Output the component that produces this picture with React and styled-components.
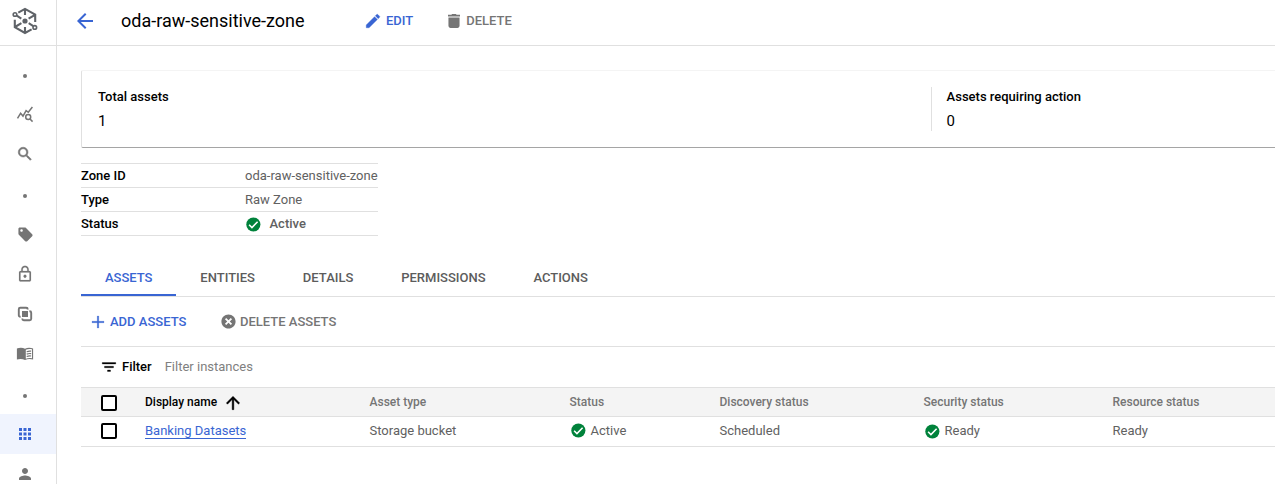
import React from "react";
import styled, { createGlobalStyle } from "styled-components";

const blue = "#3965d3";
const grey = "#757575";
const line = "#e0e0e0";

const GlobalStyle = createGlobalStyle`
  * { box-sizing: border-box; }
  body { margin: 0; background: #fff; overflow: hidden; font-family: Roboto, "Liberation Sans", sans-serif; font-size: 13px; color: #616161; }
`;

const Page = styled.div`
  display: flex;
  width: 1275px;
  height: 484px;
  overflow: hidden;
`;
const Sidebar = styled.nav`
  flex: 0 0 57px;
  height: 484px;
  overflow: hidden;
  border-right: 1px solid ${line};
`;
const LogoBox = styled.div`
  height: 46px;
  border-bottom: 1px solid ${line};
  margin-bottom: 8px;
  padding: 7px 0 0 11px;
`;
const NavItem = styled.div`
  height: 40px;
  width: 56px;
  padding-right: 6px;
  display: flex;
  align-items: center;
  justify-content: center;
  color: ${(p) => (p.$active ? blue : grey)};
  background: ${(p) => (p.$active ? "#f0f4fe" : "transparent")};
`;
const Dot = styled.span`
  width: 4px;
  height: 4px;
  margin-top: 4px;
  border-radius: 50%;
  background: ${grey};
`;
const Icon = styled.svg`
  display: block;
  flex: none;
  fill: currentColor;
`;
const Main = styled.main`
  flex: 1;
  min-width: 0;
`;
const Header = styled.header`
  height: 46px;
  border-bottom: 1px solid ${line};
  padding: 0 0 4px 16px;
  display: flex;
  align-items: center;
  color: ${blue};
`;
const Title = styled.h1`
  margin: 0 60px 0 24px;
  width: 183px;
  font-size: 18px;
  line-height: 24px;
  font-weight: 400;
  color: #000;
  white-space: nowrap;
`;
const Action = styled.button`
  display: flex;
  align-items: center;
  gap: ${(p) => p.$gap ?? 3}px;
  margin: 0 ${(p) => p.$after ?? 0}px 0 0;
  padding: 0;
  border: 0;
  background: none;
  font: 500 13px/18px Roboto, sans-serif;
  white-space: nowrap;
  color: ${(p) => (p.$muted ? grey : blue)};
`;
const Content = styled.div`
  padding: 24px 0 0 24px;
`;
const Card = styled.section`
  display: flex;
  height: 78px;
  padding: 16px 0 0 16px;
  border: solid;
  border-width: 1px 0 1px 1px;
  border-color: #f4f4f4 transparent #a5a5a5 #e0e0e0;
  border-radius: 2px 0 0 2px;
`;
const Metric = styled.div`
  flex: 0 0 ${(p) => p.$width}px;
  height: 44px;
  padding-top: 1px;
  padding-left: ${(p) => (p.$divided ? 14.6 : 0)}px;
  border-left: ${(p) => (p.$divided ? `1px solid ${line}` : "0")};
  color: #000;
`;
const MetricLabel = styled.div`
  font-weight: 500;
  line-height: 18px;
`;
const MetricValue = styled.div`
  font-size: 15px;
  line-height: 20px;
  margin-top: 5px;
`;
const Facts = styled.dl`
  width: 297px;
  margin: 15px 0 0;
  border-top: 1px solid ${line};
`;
const Fact = styled.div`
  display: flex;
  height: 24px;
  line-height: 23px;
  border-bottom: 1px solid ${line};
`;
const Term = styled.dt`
  flex: 0 0 164px;
  font-weight: 500;
  color: #000;
`;
const Detail = styled.dd`
  margin: 0;
  display: flex;
  align-items: center;
  gap: 7.5px;
  white-space: nowrap;
  font-weight: ${(p) => (p.$strong ? 500 : 400)};
`;
const Tabs = styled.div`
  display: flex;
  height: 37px;
  margin-top: 24px;
  border-bottom: 1px solid ${line};
`;
const Tab = styled.div`
  height: 36px;
  padding: 0 23.95px;
  line-height: 36px;
  font-weight: 500;
  white-space: nowrap;
  color: ${(p) => (p.$active ? blue : "#5c5c5c")};
  border-bottom: 2px solid ${(p) => (p.$active ? blue : "transparent")};
`;
const Toolbar = styled.div`
  display: flex;
  align-items: center;
  height: 50px;
  padding-left: 8px;
  border-bottom: 1px solid ${line};
`;
const FilterBar = styled.div`
  display: flex;
  align-items: center;
  height: 40px;
  padding-left: 19px;
  color: #000;
`;
const FilterLabel = styled.span`
  font-weight: 500;
  line-height: 16px;
  margin: 0 13px 0 4px;
`;
const Placeholder = styled.span`
  line-height: 16px;
  color: #808080;
`;
const Row = styled.div`
  display: grid;
  grid-template-columns: 64px 224.5px 200px 150px 204px 189px 1fr;
  align-items: center;
  height: 30px;
  padding-bottom: ${(p) => p.$lift ?? 0}px;
  border-bottom: 1px solid ${line};
  white-space: nowrap;
`;
const HeadRow = styled(Row)`
  border-top: 1px solid ${line};
  background: #f4f4f4;
  font-size: 12px;
  font-weight: 500;
  color: ${grey};
`;
const Checkbox = styled.span`
  width: 16px;
  height: 16px;
  margin: ${(p) => p.$top ?? 0}px 0 0 20px;
  border: 2px solid #000;
  border-radius: 2px;
  background: #fff;
`;
const Cell = styled.div`
  display: flex;
  align-items: center;
  gap: ${(p) => p.$gap ?? 4}px;
`;
const SortedCell = styled(Cell)`
  color: #000;
`;
const SortIcon = styled(Icon)`
  margin-top: 2px;
`;
const Link = styled.a`
  line-height: 15px;
  color: ${blue};
  border-bottom: 1px solid ${blue};
`;
const CheckIcon = styled(Icon)`
  color: #00823b;
  margin-top: ${(p) => p.$drop ?? 0}px;
`;

const Glyph = ({ d, size = 18, weight = 0, as: Svg = Icon }) => (
  <Svg width={size} height={size} viewBox="0 0 24 24">
    <path d={d} stroke="currentColor" strokeWidth={weight} />
  </Svg>
);
const Check = ({ drop }) => (
  <CheckIcon $drop={drop} width="17" height="17" viewBox="0 0 24 24">
    <circle cx="11.8" cy="12" r="10" />
    <path d="m5.8 12.3 4 4 8-8.2" fill="none" stroke="#fff" strokeWidth="2.2" />
  </CheckIcon>
);

const paths = {
  back: "M20 11H7.83l5.59-5.59L12 4l-8 8 8 8 1.41-1.41L7.83 13H20v-2z",
  edit: "M3 17.25V21h3.75L17.81 9.94l-3.75-3.75L3 17.25zM20.71 7.04a.996.996 0 0 0 0-1.41l-2.34-2.34a.996.996 0 0 0-1.41 0l-1.83 1.83 3.75 3.75 1.83-1.83z",
  trash: "M4.6 7.3V18.4C4.6 20 5.8 21.2 7.4 21.2h9.2c1.6 0 2.8-1.2 2.8-2.8V7.3zM20 3.8h-4.5l-1-1h-5l-1 1H4v2.1h16z",
  search: "M15.5 14h-.79l-.28-.27A6.47 6.47 0 0 0 16 9.5 6.5 6.5 0 1 0 9.5 16c1.61 0 3.09-.59 4.23-1.57l.27.28v.79l5 4.99L20.49 19l-4.99-5zm-6 0C7.01 14 5 11.99 5 9.5S7.01 5 9.5 5 14 7.01 14 9.5 11.99 14 9.5 14z",
  tag: "M21.41 11.58l-9-9C12.05 2.22 11.55 2 11 2H4c-1.1 0-2 .9-2 2v7c0 .55.22 1.05.59 1.42l9 9c.36.36.86.58 1.41.58s1.05-.22 1.41-.59l7-7c.37-.36.59-.86.59-1.41s-.23-1.06-.59-1.42zM6.4 8.2C5.4 8.2 4.6 7.4 4.6 6.4S5.4 4.6 6.4 4.6 8.2 5.4 8.2 6.4 7.4 8.2 6.4 8.2z",
  lock: "M18 8h-1V6c0-2.76-2.24-5-5-5S7 3.24 7 6v2H6c-1.1 0-2 .9-2 2v10c0 1.1.9 2 2 2h12c1.1 0 2-.9 2-2V10c0-1.1-.9-2-2-2zM9 6c0-1.66 1.34-3 3-3s3 1.34 3 3v2H9V6zm9 14H6V10h12v10zm-6-3c1.1 0 2-.9 2-2s-.9-2-2-2-2 .9-2 2 .9 2 2 2z",
  apps: "M4 8h4V4H4v4zm6 12h4v-4h-4v4zm-6 0h4v-4H4v4zm0-6h4v-4H4v4zm6 0h4v-4h-4v4zm6-10v4h4V4h-4zm-6 4h4V4h-4v4zm6 6h4v-4h-4v4zm0 6h4v-4h-4v4z",
  person: "M12 12c2.21 0 4-1.79 4-4s-1.79-4-4-4-4 1.79-4 4 1.79 4 4 4zm0 2c-2.67 0-8 1.34-8 4v2h16v-2c0-2.66-5.33-4-8-4z",
  cancel: "M12 2C6.47 2 2 6.47 2 12s4.47 10 10 10 10-4.47 10-10S17.53 2 12 2zm5 13.2L15.2 17 12 13.8 8.8 17 7 15.2 10.2 12 7 8.8 8.8 7 12 10.2 15.2 7 17 8.8 13.8 12z",
  filter: "M10 18h4v-2h-4v2zM3 6v2h18V6H3zm3 7h12v-2H6v2z",
  sort: "M4 12l1.41 1.41L11 7.83V20h2V7.83l5.58 5.59L20 12l-8-8-8 8z",
  add: "M20 13h-7v7h-2v-7H4v-2h7V4h2v7h7v2z",
};

const Logo = () => (
  <Icon width="28" height="28" viewBox="0 0 28 28">
    <g fill="none" stroke="#5f6368" strokeWidth="2.1">
      <path d="M7.3 5.6 14 1.9l10.2 5.7v7.3M14 1.9v6M17.6 11.7l6.4-3.9M3.8 12.8v7.4L14 26l6.6-3.6M14 26v-6M10.4 16.1 4 20M5.8 8.7l4.5 2.9M17.7 16.2l4.6 2.9" />
      <circle cx="4" cy="7.5" r="1.8" strokeWidth="1.6" />
      <circle cx="23.8" cy="20.4" r="1.8" strokeWidth="1.6" />
    </g>
    <circle cx="14" cy="14" r="2.6" fill="#5f6368" />
  </Icon>
);
const Explore = () => (
  <Icon width="18" height="18" viewBox="0 0 18 18">
    <g fill="none" stroke="currentColor" strokeWidth="1.5">
      <path d="M1.5 13.4 4.6 8.3l2.4 2.8 3.1-5.5 2.2 1.7L16.4 2" />
      <circle cx="12.2" cy="12" r="2.5" />
      <path d="m14 14 2.6 2.6" />
    </g>
  </Icon>
);
const Overlap = () => (
  <Icon width="18" height="18" viewBox="0 0 18 18">
    <path
      d="M4.6 11.7H4.3A1.5 1.5 0 0 1 2.8 10.2V4.3A1.5 1.5 0 0 1 4.3 2.800h5.900a1.500 1.500 0 0 1 1.500 1.500v.3M13.400 6.300h.3a1.500 1.500 0 0 1 1.500 1.500v5.900a1.500 1.500 0 0 1-1.500 1.500H7.800a1.500 1.500 0 0 1-1.500-1.500v-.3"
      fill="none"
      stroke="currentColor"
      strokeWidth="1.9"
    />
    <path d="M6 6h6v6H6z" />
  </Icon>
);
const Book = () => (
  <Icon width="18" height="18" viewBox="0 0 18 18">
    <path d="M.9 3.5C3.5 2.6 6.7 2.5 9 3.8c2.3-1.3 5.5-1.2 8.1-.3v11c-2.7-.8-5.6-.8-8.1.6-2.5-1.4-5.4-1.4-8.1-.6z" />
    <path d="M9.8 4.7c1.9-.9 4-1 6.2-.4v8.9c-2.2-.5-4.3-.3-6.2.5z" fill="#fff" />
    <path d="M10.7 6.7q2-.8 4.5-.5M10.7 9.1q2-.8 4.5-.5M10.7 11.5q2-.8 4.5-.5" fill="none" stroke="currentColor" strokeWidth="1.2" />
  </Icon>
);

const nav = [
  <Dot />, <Explore />, <Glyph d={paths.search} weight={0.7} />, <Dot />,
  <Glyph d={paths.tag} size={17} />, <Glyph d={paths.lock} weight={0.2} />, <Overlap />, <Book />,
  <Dot />, <Glyph d={paths.apps} />, <Glyph d={paths.person} />,
];

export default function App() {
  return (
    <>
      <GlobalStyle />
      <Page>
        <Sidebar>
          <LogoBox><Logo /></LogoBox>
          {nav.map((icon, i) => <NavItem key={i} $active={i === 9}>{icon}</NavItem>)}
        </Sidebar>
        <Main>
          <Header>
            <Glyph d={paths.back} size={24} />
            <Title>oda-raw-sensitive-zone</Title>
            <Action $gap={4} $after={32}><Glyph d={paths.edit} weight={0.5} />EDIT</Action>
            <Action $muted><Glyph d={paths.trash} />DELETE</Action>
          </Header>
          <Content>
            <Card>
              <Metric $width={833}>
                <MetricLabel>Total assets</MetricLabel>
                <MetricValue>1</MetricValue>
              </Metric>
              <Metric $width={343} $divided>
                <MetricLabel>Assets requiring action</MetricLabel>
                <MetricValue>0</MetricValue>
              </Metric>
            </Card>
            <Facts>
              <Fact><Term>Zone ID</Term><Detail>oda-raw-sensitive-zone</Detail></Fact>
              <Fact><Term>Type</Term><Detail>Raw Zone</Detail></Fact>
              <Fact><Term>Status</Term><Detail $strong><Check drop={1} />Active</Detail></Fact>
            </Facts>
            <Tabs>
              <Tab $active>ASSETS</Tab>
              <Tab>ENTITIES</Tab>
              <Tab>DETAILS</Tab>
              <Tab>PERMISSIONS</Tab>
              <Tab>ACTIONS</Tab>
            </Tabs>
            <Toolbar>
              <Action $after={33.6}><Glyph d={paths.add} weight={0.3} />ADD ASSETS</Action>
              <Action $muted><Glyph d={paths.cancel} size={17} />DELETE ASSETS</Action>
            </Toolbar>
            <FilterBar>
              <Glyph d={paths.filter} weight={0.4} />
              <FilterLabel>Filter</FilterLabel>
              <Placeholder>Filter instances</Placeholder>
            </FilterBar>
            <HeadRow>
              <Checkbox $top={2} />
              <SortedCell $gap={6}>Display name<Glyph d={paths.sort} as={SortIcon} size={20} weight={0.5} /></SortedCell>
              <Cell>Asset type</Cell>
              <Cell>Status</Cell>
              <Cell>Discovery status</Cell>
              <Cell>Security status</Cell>
              <Cell>Resource status</Cell>
            </HeadRow>
            <Row $lift={2}>
              <Checkbox />
              <Cell><Link>Banking Datasets</Link></Cell>
              <Cell>Storage bucket</Cell>
              <Cell><Check />Active</Cell>
              <Cell>Scheduled</Cell>
              <Cell><Check drop={2} />Ready</Cell>
              <Cell>Ready</Cell>
            </Row>
          </Content>
        </Main>
      </Page>
    </>
  );
}
